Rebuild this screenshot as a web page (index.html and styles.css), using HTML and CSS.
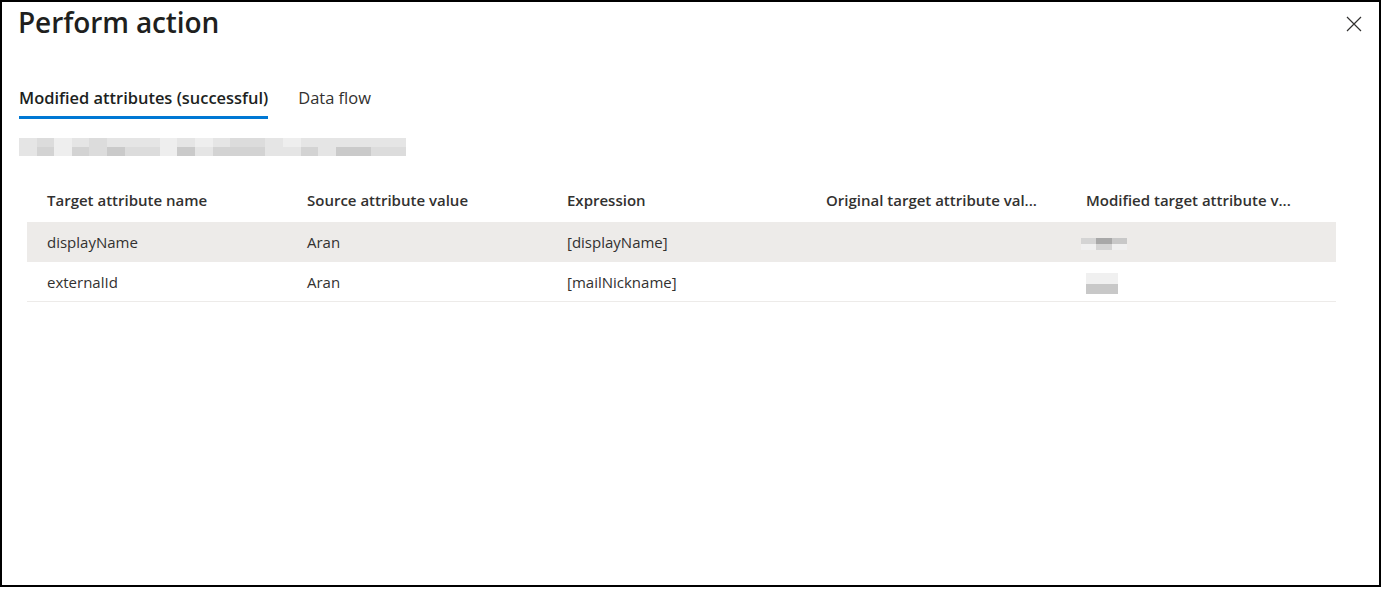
FILE: index.html
```html
<!DOCTYPE html>
<html lang="en">
<head>
<meta charset="utf-8">
<title>Perform action</title>
<link rel="stylesheet" href="styles.css">
</head>
<body>
<div class="dialog">
  <div class="head">
    <h1 class="title">Perform action</h1>
    <button class="close" aria-label="Close">
      <svg width="16" height="16" viewBox="0 0 16 16"><path d="M1 1 L15 15 M15 1 L1 15" stroke="#323130" stroke-width="1.2" fill="none"/></svg>
    </button>
  </div>
  <div class="tabs">
    <div class="tab active">Modified attributes (successful)</div>
    <div class="tab">Data flow</div>
  </div>
  <div class="blur">
    <i class="s2"></i><i class="s3"></i><i class="s1"></i><i class="s2"></i><i class="s3"></i><i class="s2"></i><i class="s2"></i><i class="s2"></i><i class="s1"></i><i class="s2"></i><i class="s1"></i><i class="s2"></i><i class="s3"></i><i class="s3"></i><i class="s2"></i><i class="s1"></i><i class="s2"></i><i class="s2"></i><i class="s2"></i><i class="s2"></i><i class="s2"></i><i class="s2"></i>
    <i class="s2"></i><i class="s4"></i><i class="s1"></i><i class="s4"></i><i class="s3"></i><i class="s5"></i><i class="s3"></i><i class="s3"></i><i class="s1"></i><i class="s5"></i><i class="s2"></i><i class="s4"></i><i class="s4"></i><i class="s4"></i><i class="s2"></i><i class="s2"></i><i class="s4"></i><i class="s2"></i><i class="s5"></i><i class="s5"></i><i class="s3"></i><i class="s3"></i>
  </div>
  <div class="table">
    <div class="row hdr">
      <div class="cell">Target attribute name</div>
      <div class="cell">Source attribute value</div>
      <div class="cell">Expression</div>
      <div class="cell">Original target attribute val...</div>
      <div class="cell">Modified target attribute v...</div>
    </div>
    <div class="row sel">
      <div class="cell">displayName</div>
      <div class="cell">Aran</div>
      <div class="cell">[displayName]</div>
      <div class="cell"></div>
      <div class="cell"><span class="mini a"><i class="m1"></i><i class="m3"></i><i class="m2"></i><i class="m0"></i><i class="m1"></i><i class="m0"></i></span></div>
    </div>
    <div class="row">
      <div class="cell">externalId</div>
      <div class="cell">Aran</div>
      <div class="cell">[mailNickname]</div>
      <div class="cell"></div>
      <div class="cell"><span class="mini b"><i class="m0"></i><i class="m0"></i><i class="m2"></i><i class="m2"></i></span></div>
    </div>
  </div>
</div>
</body>
</html>
```
FILE: styles.css
```css
* { box-sizing: border-box; }
html, body { margin: 0; padding: 0; background: #fff; }
body {
  font-family: "Segoe UI", "Open Sans", "Noto Sans", sans-serif;
  color: #323130;
}
.dialog {
  width: 1381px;
  height: 587px;
  border: 2px solid #000;
  background: #fff;
  padding: 0 0 0 16px;
}
.head {
  display: flex;
  justify-content: space-between;
  align-items: flex-start;
}
.title {
  margin: 0;
  font-size: 28px;
  font-weight: 600;
  line-height: 40px;
  color: #201f1e;
  letter-spacing: -0.1px;
}
.close {
  border: 0;
  background: none;
  padding: 0;
  margin: 14px 17px 0 0;
  width: 16px;
  height: 16px;
  display: flex;
}
.tabs {
  display: flex;
  gap: 30px;
  margin-top: 44px;
  padding-left: 1px;
}
.tab {
  font-size: 16.45px;
  line-height: 22px;
  padding-top: 1px;
  padding-bottom: 7px;
  border-bottom: 3px solid transparent;
  color: #323130;
  white-space: nowrap;
}
.tab.active {
  font-weight: 600;
  border-bottom-color: #0078d4;
  color: #201f1e;
}
.blur {
  margin: 19px 0 0 1px;
  display: grid;
  grid-template-columns: repeat(22, 17.6px);
  grid-template-rows: 9px 9px;
  width: 387px;
}
.blur i { display: block; }
.s1 { background: #eeeeee; }
.s2 { background: #e5e5e5; }
.s3 { background: #dcdcdc; }
.s4 { background: #d3d3d3; }
.s5 { background: #cacaca; }
.table {
  margin: 24px 43px 0 9px;
}
.row {
  display: grid;
  grid-template-columns: 260px 260px 259px 260px 1fr;
  height: 40px;
  align-items: center;
  border-bottom: 1px solid #edebe9;
  font-size: 15px;
}
.row.hdr {
  height: 42px;
  border-bottom: 0;
  font-weight: 600;
  color: #323130;
  padding-bottom: 2px;
}
.row.sel {
  background: #edebe9;
  border-bottom-color: #edebe9;
}
.cell {
  padding-left: 20px;
  white-space: nowrap;
  overflow: hidden;
}
.mini {
  display: inline-grid;
  vertical-align: middle;
}
.mini i { display: block; }
.mini.a {
  grid-template-columns: 15px 16px 15px;
  grid-template-rows: 6px 6px;
  margin-left: -5px;
  margin-top: 2px;
}
.mini.b {
  grid-template-columns: 16px 16px;
  grid-template-rows: 11px 10px;
  margin-top: 4px;
}
.m0 { background: #f0f0f0; }
.m1 { background: #d4d4d4; }
.m2 { background: #c8c8c8; }
.m3 { background: #a8a8a8; }
```
